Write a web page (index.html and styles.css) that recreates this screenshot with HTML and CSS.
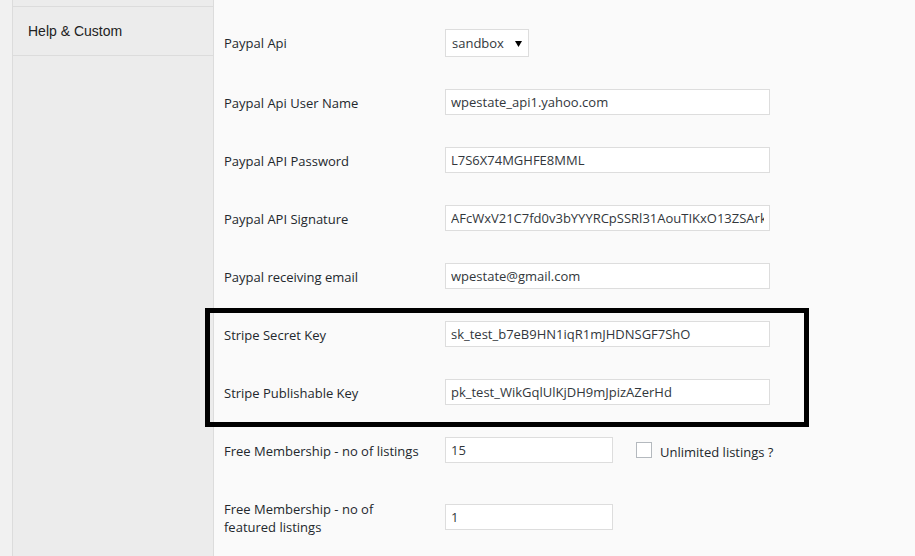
FILE: index.html
```html
<!DOCTYPE html>
<html>
<head>
<meta charset="utf-8">
<link rel="stylesheet" href="styles.css">
</head>
<body>
<div class="strip"></div>
<nav class="sidebar">
  <div class="side-prev"></div>
  <div class="side-item">Help &amp; Custom</div>
</nav>
<main class="main">
  <div class="row first">
    <div class="label">Paypal Api</div>
    <div class="field">
      <div class="select">
        <span>sandbox</span>
        <svg class="arrow" width="7" height="6" viewBox="0 0 7 6"><path d="M0 0H7L3.5 6Z" fill="#000"/></svg>
      </div>
    </div>
  </div>
  <div class="row">
    <div class="label">Paypal Api User Name</div>
    <div class="field"><input class="text" type="text" value="wpestate_api1.yahoo.com"></div>
  </div>
  <div class="row">
    <div class="label">Paypal API Password</div>
    <div class="field"><input class="text" type="text" value="L7S6X74MGHFE8MML"></div>
  </div>
  <div class="row">
    <div class="label">Paypal API Signature</div>
    <div class="field"><input class="text" type="text" value="AFcWxV21C7fd0v3bYYYRCpSSRl31AouTIKxO13ZSArkEKmQeZ"></div>
  </div>
  <div class="row">
    <div class="label">Paypal receiving email</div>
    <div class="field"><input class="text" type="text" value="wpestate@gmail.com"></div>
  </div>
  <div class="group">
    <div class="row">
      <div class="label">Stripe Secret Key</div>
      <div class="field"><input class="text" type="text" value="sk_test_b7eB9HN1iqR1mJHDNSGF7ShO"></div>
    </div>
    <div class="row">
      <div class="label">Stripe Publishable Key</div>
      <div class="field"><input class="text" type="text" value="pk_test_WikGqlUlKjDH9mJpizAZerHd"></div>
    </div>
  </div>
  <div class="row">
    <div class="label">Free Membership - no of listings</div>
    <div class="field inline">
      <input class="text short" type="text" value="15">
      <span class="check"></span>
      <span class="check-label">Unlimited listings ?</span>
    </div>
  </div>
  <div class="row">
    <div class="label narrow">Free Membership - no of featured listings</div>
    <div class="field"><input class="text short" type="text" value="1"></div>
  </div>
</main>
</body>
</html>
```
FILE: styles.css
```css
html, body {
  margin: 0;
  padding: 0;
}
body {
  display: flex;
  width: 915px;
  height: 556px;
  overflow: hidden;
  background: #fafafa;
  font-family: "Open Sans", "Liberation Sans", sans-serif;
  font-size: 13px;
  color: #32373c;
}
.strip {
  width: 12px;
  flex: none;
  background: #f1f1f1;
  border-right: 1px solid #dcdcdc;
}
.sidebar {
  width: 200px;
  flex: none;
  background: #ececec;
  border-right: 1px solid #dcdcdc;
}
.side-prev {
  height: 6px;
  border-bottom: 1px solid #dcdcdc;
}
.side-item {
  height: 48px;
  line-height: 48px;
  padding-left: 15px;
  border-bottom: 1px solid #dcdcdc;
  font-family: "Liberation Sans", Arial, sans-serif;
  font-size: 14px;
  color: #222;
}
.main {
  flex: 1;
  padding: 13px 0 0 10px;
  background: #fafafa;
}
.row {
  display: grid;
  grid-template-columns: 221px 1fr;
  align-items: center;
}
.label {
  padding: 21px 0 19px;
  line-height: 18px;
  color: #23282d;
}
.row.first .label {
  padding: 20px 0;
}
.label.narrow {
  width: 160px;
}
.field {
  padding: 16px 0;
  display: flex;
  align-items: center;
}
.select {
  box-sizing: border-box;
  width: 84px;
  height: 28px;
  background: #fff;
  border: 1px solid #ddd;
  display: flex;
  align-items: center;
  justify-content: space-between;
  padding: 0 6px 0 6px;
  color: #32373c;
}
.arrow {
  display: block;
  margin-top: 1px;
}
.text {
  box-sizing: border-box;
  width: 325px;
  height: 26px;
  margin: 0;
  padding: 0 5px;
  border: 1px solid #ddd;
  background: #fff;
  font-family: "Open Sans", "Liberation Sans", sans-serif;
  font-size: 13px;
  color: #32373c;
  outline: none;
}
.text.short {
  width: 168px;
}
.group {
  position: relative;
}
.group::after {
  content: "";
  position: absolute;
  top: 3px;
  bottom: -6px;
  left: -19px;
  width: 604px;
  box-sizing: border-box;
  border: 5px solid #000;
  pointer-events: none;
}
.check {
  box-sizing: border-box;
  width: 16px;
  height: 16px;
  margin-left: 23px;
  border: 1px solid #b4b9be;
  background: #fff;
}
.check-label {
  margin-left: 8px;
  margin-top: 3px;
  color: #23282d;
}
```
